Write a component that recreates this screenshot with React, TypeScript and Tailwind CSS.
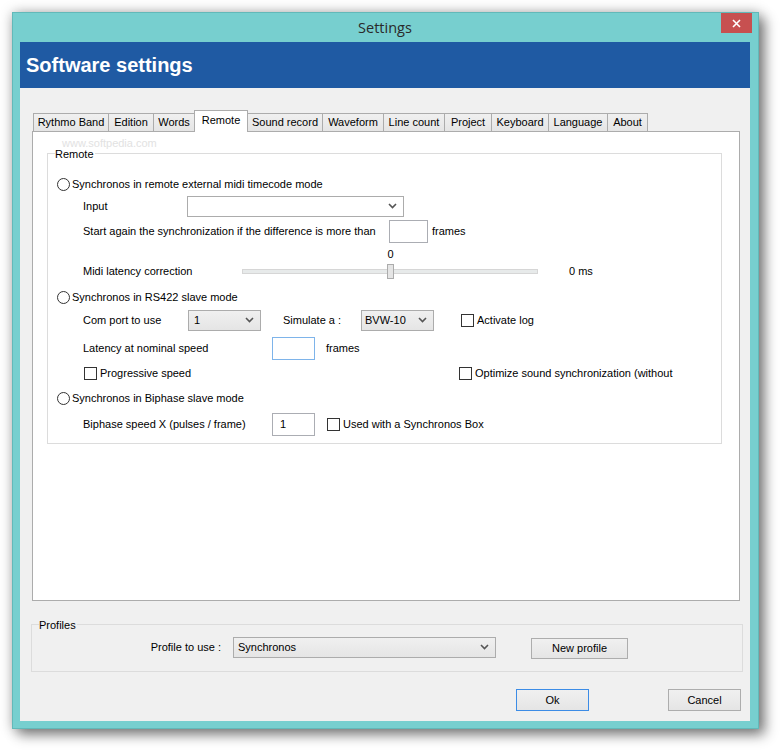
import React from 'react';

const txt = "font-['Liberation_Sans',Arial,sans-serif] text-[11px] text-[#000] leading-none";

function Chevron() {
  return (
    <svg width="9" height="6" viewBox="0 0 9 6" className="shrink-0">
      <path d="M1 1 L4.5 4.5 L8 1" fill="none" stroke="#555" strokeWidth="1.6" />
    </svg>
  );
}

function Radio({ label }: { label: string }) {
  return (
    <div className="flex items-center pl-[9px] h-full">
      <span className="w-[13px] h-[13px] rounded-full border border-[#333] bg-white shrink-0" />
      <span className="ml-[2px]">{label}</span>
    </div>
  );
}

function Check({ label }: { label: string }) {
  return (
    <div className="flex items-center">
      <span className="w-[13px] h-[13px] border border-[#333] bg-white shrink-0" />
      <span className="ml-[3px] whitespace-nowrap">{label}</span>
    </div>
  );
}

function Combo({ w, value, white, pl }: { w: string; value?: string; white?: boolean; pl?: string }) {
  return (
    <div
      className={`${w} h-[21px] border border-[#ACACAC] flex items-center justify-between pr-[6px] ${pl ?? 'pl-[4px]'} ${
        white ? 'bg-white' : 'bg-gradient-to-b from-[#F0F0F0] to-[#E5E5E5]'
      }`}
    >
      <span>{value ?? ''}</span>
      <Chevron />
    </div>
  );
}

const tabs: { name: string; w: string }[] = [
  { name: 'Rythmo Band', w: 'w-[76px]' },
  { name: 'Edition', w: 'w-[46px]' },
  { name: 'Words', w: 'w-[42px]' },
  { name: 'Remote', w: 'w-[54px]' },
  { name: 'Sound record', w: 'w-[76px]' },
  { name: 'Waveform', w: 'w-[62px]' },
  { name: 'Line count', w: 'w-[62px]' },
  { name: 'Project', w: 'w-[48px]' },
  { name: 'Keyboard', w: 'w-[58px]' },
  { name: 'Language', w: 'w-[60px]' },
  { name: 'About', w: 'w-[41px]' },
];

export default function App() {
  return (
    <div className="w-[780px] h-[750px] bg-white pt-[12px] pl-[12px] overflow-hidden">
      <div className="w-[747px] bg-[#77CFCF] border border-[#62B9B9] pl-[7px] pr-[8px] pb-[7px] shadow-[0_0_12px_rgba(0,0,0,0.25),6px_6px_12px_rgba(0,0,0,0.45)]">
        {/* Title bar */}
        <div className="relative h-[29px] flex items-center justify-center">
          <span className="font-['Open_Sans',sans-serif] text-[14.5px] text-[#2a2a2a] mt-[1px]">Settings</span>
          <div className="absolute right-[-2px] top-0 w-[31px] h-[20px] bg-[#C75050] flex items-center justify-center">
            <svg width="9" height="9" viewBox="0 0 9 9">
              <path d="M1 1 L8 8 M8 1 L1 8" stroke="#fff" strokeWidth="1.6" />
            </svg>
          </div>
        </div>

        {/* Client area */}
        <div className={`w-[730px] h-[679px] bg-[#F0F0F0] flex flex-col ${txt}`}>
          <div className="h-[46px] bg-[#1F5AA3] flex items-center pl-[6px]">
            <span className="font-['Liberation_Sans',Arial,sans-serif] font-bold text-[20px] text-white">Software settings</span>
          </div>

          {/* Tabs */}
          <div className="ml-[12px] pt-[22px] relative">
            <div className="absolute left-[30px] top-[50px] text-[11px] text-[#e2e2e2] font-['Liberation_Sans',Arial,sans-serif] pointer-events-none z-20">
              www.softpedia.com
            </div>
            <div className="flex items-end pl-[1px] h-[22px] -mb-px relative z-10">
              {tabs.map((t, i) => {
                const sel = t.name === 'Remote';
                return (
                  <div
                    key={t.name}
                    className={`${t.w} ${i > 0 ? '-ml-px' : ''} border border-b-0 border-[#ACACAC] flex items-center justify-center whitespace-nowrap ${
                      sel ? 'h-[22px] bg-white relative z-10 pb-[3px]' : 'h-[18px] mb-px bg-gradient-to-b from-[#F0F0F0] to-[#E5E5E5]'
                    }`}
                  >
                    {t.name}
                  </div>
                );
              })}
            </div>
            <div className="w-[708px] h-[470px] border border-[#ACACAC] bg-white pl-[14px] pt-[21px]">
              {/* Remote group */}
              <div className="relative w-[675px] h-[291px] border border-[#DCDCDC] flex flex-col">
                <span className="absolute left-[7px] top-[-7px] bg-white pr-[1px] leading-[14px]">Remote</span>
                <div className="h-[20px]" />
                <div className="h-[20px]">
                  <Radio label="Synchronos in remote external midi timecode mode" />
                </div>
                <div className="h-[24px] flex items-center pl-[35px]">
                  <span className="w-[104px]">Input</span>
                  <Combo w="w-[217px]" white />
                </div>
                <div className="h-[26px] flex items-center pl-[35px]">
                  <span className="w-[306px] whitespace-nowrap">Start again the synchronization if the difference is more than</span>
                  <div className="w-[39px] h-[23px] border border-[#ABADB3] bg-white" />
                  <span className="ml-[4px]">frames</span>
                </div>
                <div className="h-[20px] flex items-center pl-[339px]">
                  <span className="w-[7px] text-center">0</span>
                </div>
                <div className="h-[14px] flex items-center pl-[35px]">
                  <span className="w-[159px] whitespace-nowrap">Midi latency correction</span>
                  <div className="relative w-[296px] h-[5px] bg-[#E7EAEA] border border-[#D6D6D6]">
                    <div className="absolute left-[144px] top-[-6px] w-[7px] h-[15px] bg-[#E5E5E5] border border-[#ACACAC]" />
                  </div>
                  <span className="ml-[31px]">0 ms</span>
                </div>
                <div className="h-[9px]" />
                <div className="h-[20px]">
                  <Radio label="Synchronos in RS422 slave mode" />
                </div>
                <div className="h-[26px] flex items-center pl-[35px]">
                  <span className="w-[105px] whitespace-nowrap">Com port to use</span>
                  <Combo w="w-[73px]" value="1" pl="pl-[5px]" />
                  <span className="ml-[22px] w-[78px] whitespace-nowrap">Simulate a :</span>
                  <Combo w="w-[73px]" value="BVW-10" pl="pl-[3px]" />
                  <div className="ml-[27px]">
                    <Check label="Activate log" />
                  </div>
                </div>
                <div className="h-[30px] flex items-center pl-[35px]">
                  <span className="w-[189px] whitespace-nowrap">Latency at nominal speed</span>
                  <div className="w-[43px] h-[23px] border border-[#7EB4EA] bg-white" />
                  <span className="ml-[11px]">frames</span>
                </div>
                <div className="h-[20px] flex items-center pl-[36px]">
                  <div className="w-[375px]">
                    <Check label="Progressive speed" />
                  </div>
                  <Check label="Optimize sound synchronization (without" />
                </div>
                <div className="h-[30px]">
                  <Radio label="Synchronos in Biphase slave mode" />
                </div>
                <div className="h-[22px] flex items-center pl-[35px]">
                  <span className="w-[189px] whitespace-nowrap">Biphase speed X (pulses / frame)</span>
                  <div className="w-[43px] h-[23px] border border-[#ABADB3] bg-white flex items-center pl-[7px]">1</div>
                  <div className="ml-[12px]">
                    <Check label="Used with a Synchronos Box" />
                  </div>
                </div>
              </div>
            </div>
          </div>

          {/* Profiles */}
          <div className="relative ml-[11px] mt-[23px] w-[712px] h-[48px] border border-[#DCDCDC] pt-[11px]">
            <span className="absolute left-[7px] top-[-7px] bg-[#F0F0F0] pr-[1px] leading-[14px]">Profiles</span>
            <div className="flex items-center h-[22px]">
              <span className="w-[189px] text-right whitespace-nowrap">Profile to use :</span>
              <div className="ml-[12px]">
                <Combo w="w-[263px]" value="Synchronos" />
              </div>
              <div className="ml-[35px] w-[97px] h-[21px] border border-[#ADADAD] bg-gradient-to-b from-[#F0F0F0] to-[#E5E5E5] flex items-center justify-center mt-[2px]">
                New profile
              </div>
            </div>
          </div>

          {/* Buttons */}
          <div className="flex mt-[17px] pl-[496px]">
            <div className="w-[73px] h-[22px] border border-[#3C8CE6] bg-gradient-to-b from-[#F0F0F0] to-[#E5E5E5] flex items-center justify-center">
              Ok
            </div>
            <div className="ml-[79px] w-[73px] h-[22px] border border-[#ADADAD] bg-gradient-to-b from-[#F0F0F0] to-[#E5E5E5] flex items-center justify-center">
              Cancel
            </div>
          </div>
        </div>
      </div>
    </div>
  );
}
